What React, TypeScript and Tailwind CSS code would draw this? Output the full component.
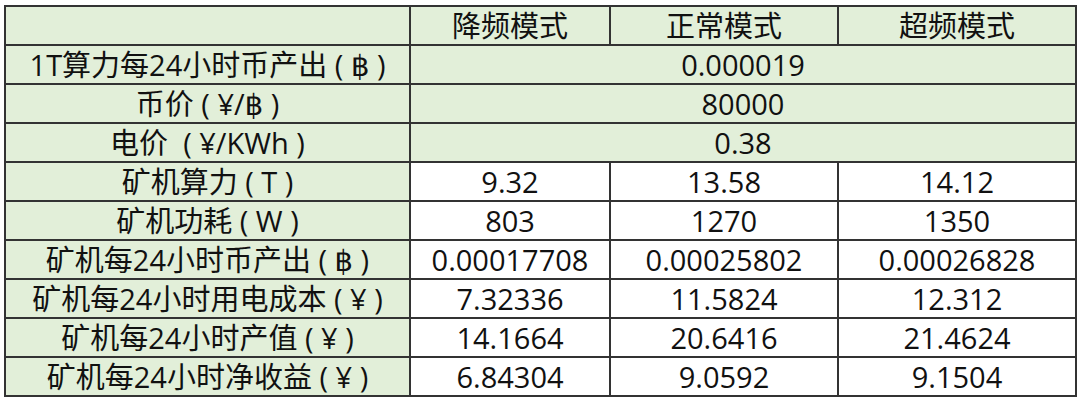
import React from 'react';

const modes = ['降频模式', '正常模式', '超频模式'];

// spaced units, like the original sheet
const u = (s: string) => ` ( ${s} )`;

const shared = [
  { label: '1T算力每24小时币产出' + u('฿'), value: '0.000019' },
  { label: '币价' + u('¥/฿'), value: '80000' },
  { label: '电价 ' + u('¥/KWh'), value: '0.38' },
];

const rows = [
  { label: '矿机算力' + u('T'), values: ['9.32', '13.58', '14.12'] },
  { label: '矿机功耗' + u('W'), values: ['803', '1270', '1350'] },
  { label: '矿机每24小时币产出' + u('฿'), values: ['0.00017708', '0.00025802', '0.00026828'] },
  { label: '矿机每24小时用电成本' + u('¥'), values: ['7.32336', '11.5824', '12.312'] },
  { label: '矿机每24小时产值' + u('¥'), values: ['14.1664', '20.6416', '21.4624'] },
  { label: '矿机每24小时净收益' + u('¥'), values: ['6.84304', '9.0592', '9.1504'] },
];

const cell = 'border-2 border-[#333] text-center align-middle p-0 leading-none whitespace-pre';

export default function App() {
  return (
    <div
      className="w-[1080px] h-[401px] bg-white pl-[4px] pt-[5px] text-[#111] text-[29px]"
      style={{ fontFamily: '"Open Sans", "Noto Sans CJK SC", "DejaVu Sans", sans-serif' }}
    >
      <table className="border-collapse table-fixed w-[1071px]">
        <colgroup>
          <col className="w-[405px]" />
          <col className="w-[200px]" />
          <col className="w-[228px]" />
          <col className="w-[238px]" />
        </colgroup>
        <tbody>
          <tr className="h-[39px] bg-[#e2efd9]">
            <td className={cell}></td>
            {modes.map((m) => (
              <td key={m} className={cell}>{m}</td>
            ))}
          </tr>
          {shared.map((r) => (
            <tr key={r.label} className="h-[39px] bg-[#e2efd9]">
              <td className={cell}>{r.label}</td>
              <td colSpan={3} className={cell}>{r.value}</td>
            </tr>
          ))}
          {rows.map((r) => (
            <tr key={r.label} className="h-[39px]">
              <td className={`${cell} bg-[#e2efd9]`}>{r.label}</td>
              {r.values.map((v, i) => (
                <td key={i} className={`${cell} bg-white`}>{v}</td>
              ))}
            </tr>
          ))}
        </tbody>
      </table>
    </div>
  );
}
